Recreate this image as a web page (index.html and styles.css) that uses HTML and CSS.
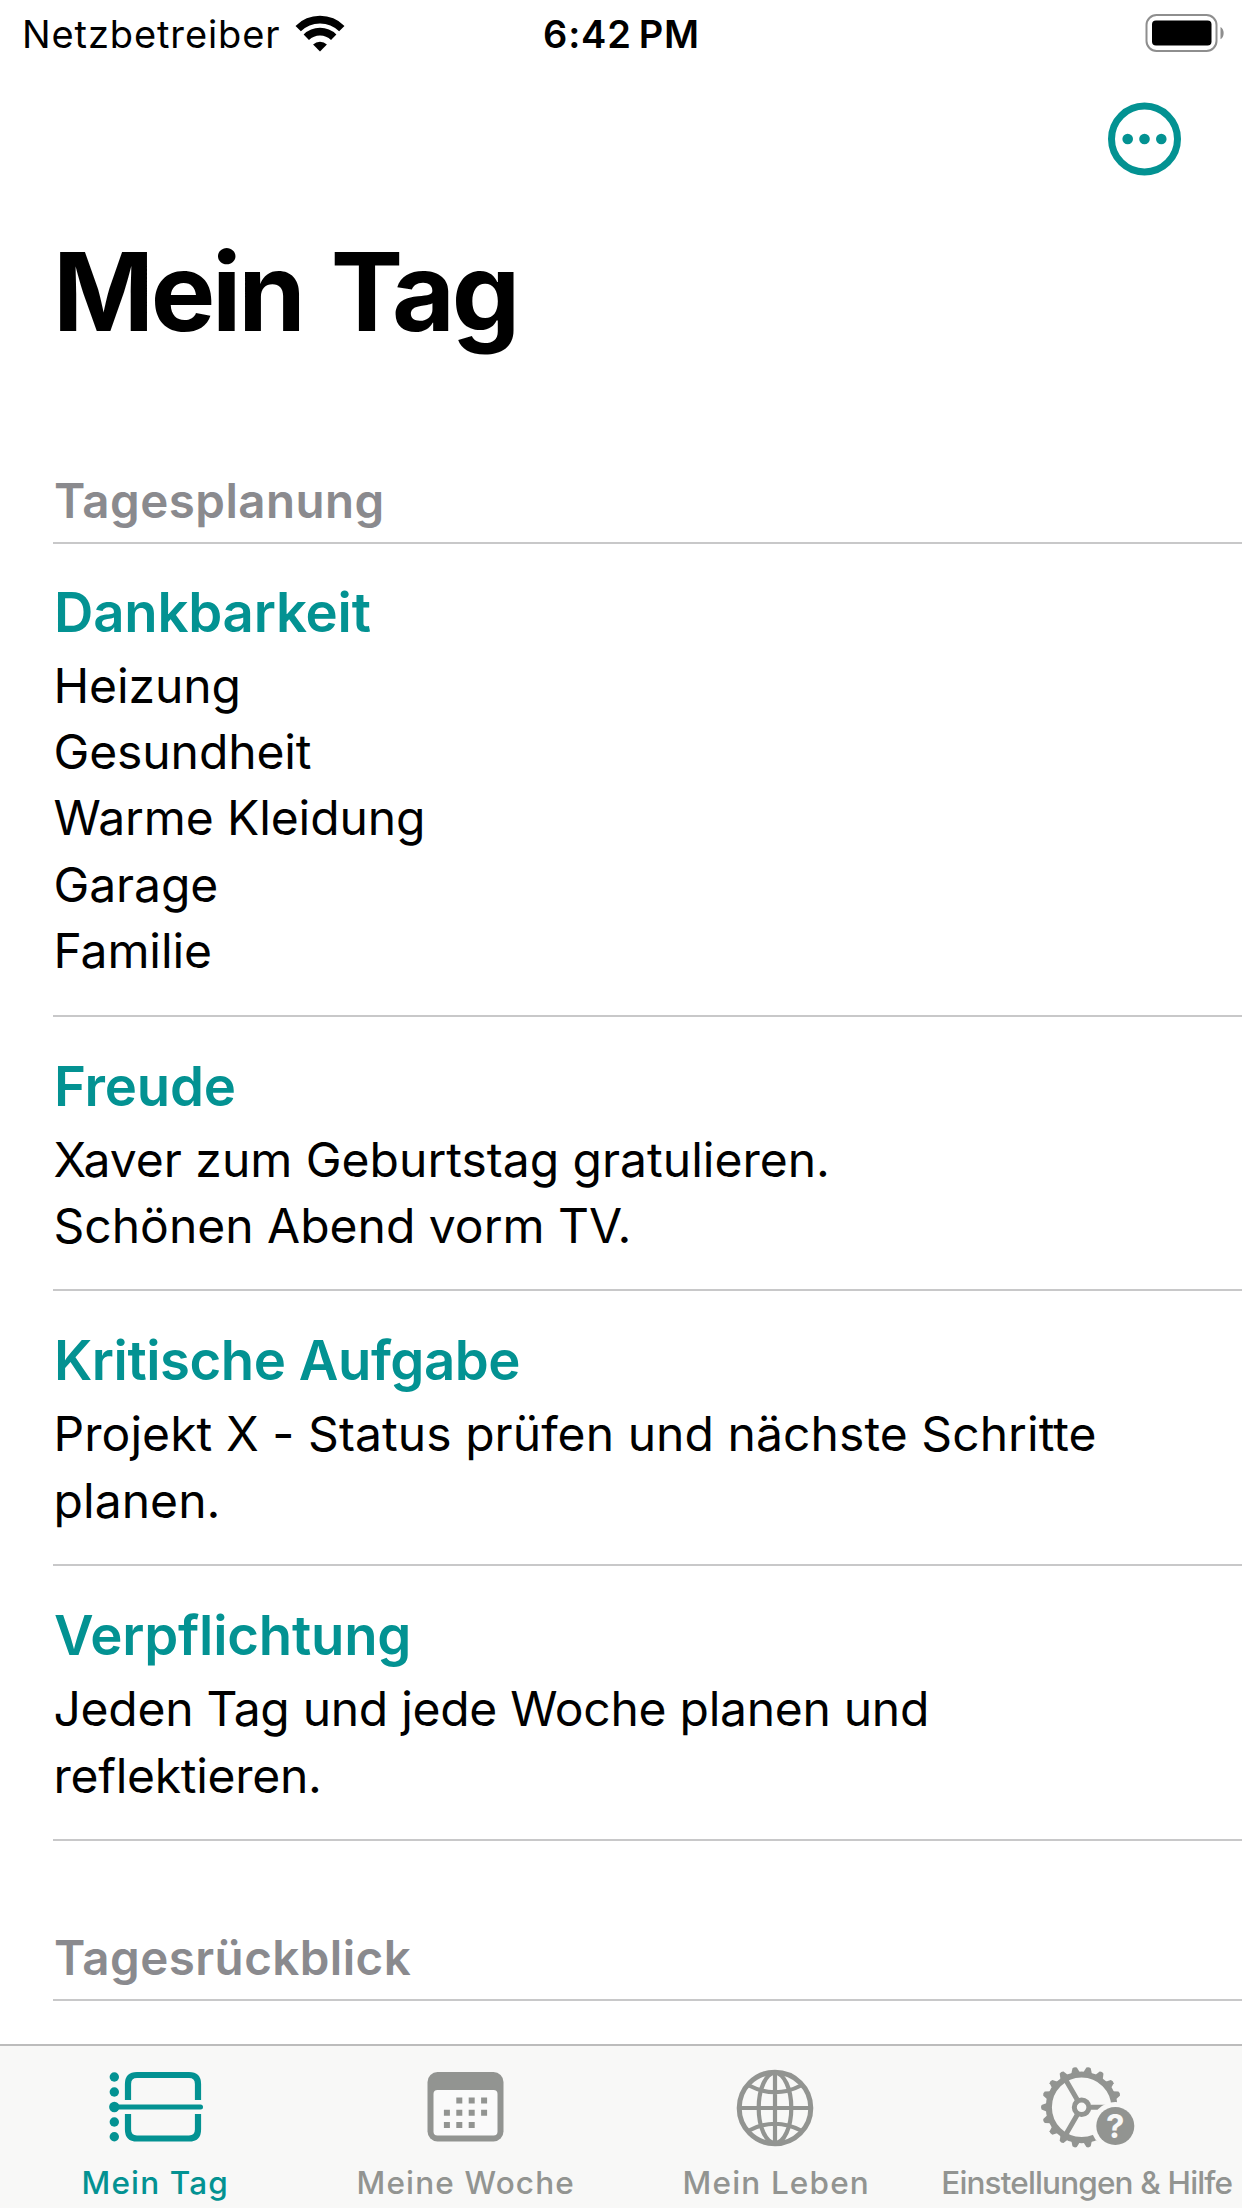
FILE: index.html
```html
<!DOCTYPE html>
<html lang="de">
<head>
  <meta charset="UTF-8">
  <meta name="viewport" content="width=device-width, initial-scale=1.0">
  <title>Mein Tag</title>
  <link rel="stylesheet" href="styles.css">
</head>
<body>
  <header class="statusbar">
    <div class="carrier">
      <span>Netzbetreiber</span>
      <svg class="wifi" width="50" height="38" viewBox="0 0 50 38">
        <path d="M3.2 13.6a31 31 0 0 1 43.6 0" fill="none" stroke="#000" stroke-width="7.6"/>
        <path d="M11.3 22.2a19.5 19.5 0 0 1 27.4 0" fill="none" stroke="#000" stroke-width="7.6"/>
        <path d="M25 36.6l-6.9-7.2a10 10 0 0 1 13.8 0z"/>
      </svg>
    </div>
    <div class="clock">6:42&#8239;PM</div>
    <svg class="battery" width="80" height="38" viewBox="0 0 80 38">
      <rect x="1.5" y="1" width="70" height="36" rx="10" fill="none" stroke="#8e8e8e" stroke-width="2"/>
      <rect x="7" y="6.5" width="59.5" height="25" rx="4"/>
      <path d="M75.5 13c4.2 1.8 4.2 10.4 0 12.2z" fill="#8e8e8e"/>
    </svg>
  </header>

  <nav class="toolbar">
    <button class="more" aria-label="Mehr">
      <svg width="74" height="74" viewBox="0 0 74 74">
        <circle cx="37.5" cy="37" r="33" fill="none" stroke="#039292" stroke-width="7"/>
        <g fill="#039292">
          <circle cx="20.7" cy="37" r="5.3"/>
          <circle cx="37.5" cy="37" r="5.3"/>
          <circle cx="54.3" cy="37" r="5.3"/>
        </g>
      </svg>
    </button>
  </nav>

  <main>
    <h1>Mein Tag</h1>

    <h2>Tagesplanung</h2>
    <section class="entry dank">
      <h3>Dankbarkeit</h3>
      <p>Heizung<br>Gesundheit<br>Warme Kleidung<br>Garage<br>Familie</p>
    </section>
    <section class="entry">
      <h3>Freude</h3>
      <p>Xaver zum Geburtstag gratulieren.<br>Schönen Abend vorm TV.</p>
    </section>
    <section class="entry aufgabe">
      <h3>Kritische Aufgabe</h3>
      <p>Projekt X - Status prüfen und nächste Schritte<br>planen.</p>
    </section>
    <section class="entry pflicht">
      <h3>Verpflichtung</h3>
      <p>Jeden Tag und jede Woche planen und<br>reflektieren.</p>
    </section>

    <h2 class="review">Tagesrückblick</h2>
  </main>

  <footer class="tabbar">
    <a class="tab active">
      <svg width="100" height="90" viewBox="0 0 100 90">
        <g fill="currentColor">
          <circle cx="9.3" cy="15" r="4.7"/>
          <circle cx="9.3" cy="30" r="4.7"/>
          <circle cx="9.3" cy="45" r="5.2"/>
          <circle cx="9.3" cy="60" r="4.7"/>
          <circle cx="9.3" cy="74.8" r="4.7"/>
        </g>
        <g fill="none" stroke="currentColor">
          <path d="M9 45h86.5" stroke-width="5" stroke-linecap="round"/>
          <path d="M23 38V22q0-9 9-9h52q9 0 9 9v16M23 52v15.5q0 9 9 9h52q9 0 9-9V52" stroke-width="6.2"/>
        </g>
      </svg>
      <span>Mein Tag</span>
    </a>
    <a class="tab">
      <svg width="100" height="90" viewBox="0 0 100 90">
        <rect x="11.5" y="10" width="76" height="69.5" rx="10" fill="currentColor"/>
        <rect x="17.5" y="28" width="64" height="45.5" rx="4" fill="#fafafa"/>
        <path d="M40.3 38.5h6M52.7 38.5h6M65.1 38.5h6M27.9 50.8h6M40.3 50.8h6M52.7 50.8h6M65.1 50.8h6M27.9 63h6M40.3 63h6M52.7 63h6" stroke="currentColor" stroke-width="6"/>
      </svg>
      <span>Meine Woche</span>
    </a>
    <a class="tab">
      <svg width="100" height="90" viewBox="0 0 100 90">
        <g fill="none" stroke="currentColor" stroke-width="4.2">
          <circle cx="49" cy="46" r="35.8" stroke-width="5"/>
          <ellipse cx="49" cy="46" rx="16.3" ry="35"/>
          <path d="M49 11v70M13 46h72M23 23.5q26 13.5 52 0M23 68.5q26-13.5 52 0"/>
        </g>
      </svg>
      <span>Mein Leben</span>
    </a>
    <a class="tab hilfe">
      <svg width="100" height="90" viewBox="0 0 100 90">
        <g id="gear" transform="translate(44.6 45.3)" fill="none" stroke="currentColor">
          <circle r="32.8" stroke-width="6.2"/>
          <circle r="7.3" stroke-width="5"/>
          <path d="M9 0h22M-4.5-7.8L-15.5-26.8M-4.5 7.8L-15.5 26.8" stroke-width="5"/>
        </g>
        <circle cx="78.3" cy="64" r="24" fill="#f8f8f7"/>
        <circle cx="78.3" cy="64" r="19" fill="currentColor"/>
        <text x="78.3" y="75.8" class="mark">?</text>
      </svg>
      <span>Einstellungen &amp; Hilfe</span>
    </a>
  </footer>

  <script>
    // 18 teeth around the gear
    const gear = document.getElementById("gear");
    for (let i = 0; i < 18; i++) {
      const tooth = document.createElementNS("http://www.w3.org/2000/svg", "path");
      tooth.setAttribute("d", "M34-4.6L40-2.2Q41.4 0 40 2.2L34 4.6Z");
      tooth.setAttribute("fill", "currentColor");
      tooth.setAttribute("stroke", "none");
      tooth.setAttribute("transform", `rotate(${i * 20})`);
      gear.appendChild(tooth);
    }
  </script>
</body>
</html>
```
FILE: styles.css
```css
* {
  box-sizing: border-box;
}
body {
  margin: 0;
  height: 2208px;
  overflow: hidden;
  display: flex;
  flex-direction: column;
  background: #fff;
  color: #000;
  font-family: Inter, "Liberation Sans", sans-serif;
}
h1, h2, h3, p {
  margin: 0;
}
.statusbar {
  height: 66px;
  padding: 0 17px 0 22px;
  display: grid;
  grid-template-columns: 1fr auto 1fr;
  align-items: center;
  font-size: 38px;
  line-height: 68px;
}
.carrier {
  display: flex;
  align-items: center;
  gap: 14px;
  letter-spacing: 0.9px;
}
.clock {
  padding-right: 4px;
  font-weight: 600;
  letter-spacing: 0.8px;
}
.battery {
  justify-self: end;
  margin-bottom: 2px;
}
.toolbar {
  height: 146px;
  padding: 36px 61px 0 0;
  display: flex;
  justify-content: flex-end;
}
.more {
  width: 74px;
  height: 74px;
  padding: 0;
  border: none;
  background: none;
}
main {
  flex: 1;
  min-height: 0;
  overflow: hidden;
  padding-left: 53px;
}
h1 {
  height: 252px;
  font-size: 108.5px;
  line-height: 160px;
  font-weight: 700;
  letter-spacing: -3.3px;
  word-spacing: 6px;
}
h2 {
  height: 80px;
  padding-left: 1px;
  border-bottom: 2px solid #c8c8c9;
  color: #8a8a8e;
  font-size: 47.5px;
  line-height: 73px;
  font-weight: 600;
  letter-spacing: 0.45px;
}
.review {
  margin-top: 80px;
}
.entry {
  padding: 33px 0 30.5px;
  border-bottom: 2px solid #c8c8c9;
}
h3 {
  margin-bottom: 5px;
  padding-left: 1px;
  color: #039292;
  font-size: 54.5px;
  line-height: 72px;
  font-weight: 600;
  letter-spacing: -0.2px;
}
p {
  padding-left: 0.5px;
  font-size: 48px;
  line-height: 66.2px;
}
.dank {
  padding-top: 32px;
}
.dank p {
  letter-spacing: -0.1px;
}
.aufgabe h3 {
  letter-spacing: -0.45px;
}
.aufgabe p {
  letter-spacing: 0.07px;
}
.pflicht p {
  letter-spacing: -0.28px;
}
.tabbar {
  height: 164px;
  border-top: 2px solid #bcbcbc;
  background: #f8f8f7;
  display: grid;
  grid-template-columns: repeat(4, 1fr);
}
.tab {
  min-width: 0;
  padding-top: 16px;
  display: flex;
  flex-direction: column;
  align-items: center;
  color: #929491;
  font-size: 31.5px;
  line-height: 44px;
  font-weight: 500;
  letter-spacing: 1.15px;
  white-space: nowrap;
}
.active {
  color: #039292;
}
.hilfe {
  letter-spacing: -0.85px;
}
.tab span {
  margin-top: 9px;
}
.mark {
  fill: #f8f8f7;
  font-size: 33px;
  font-weight: 700;
  letter-spacing: 0;
  text-anchor: middle;
}
```
